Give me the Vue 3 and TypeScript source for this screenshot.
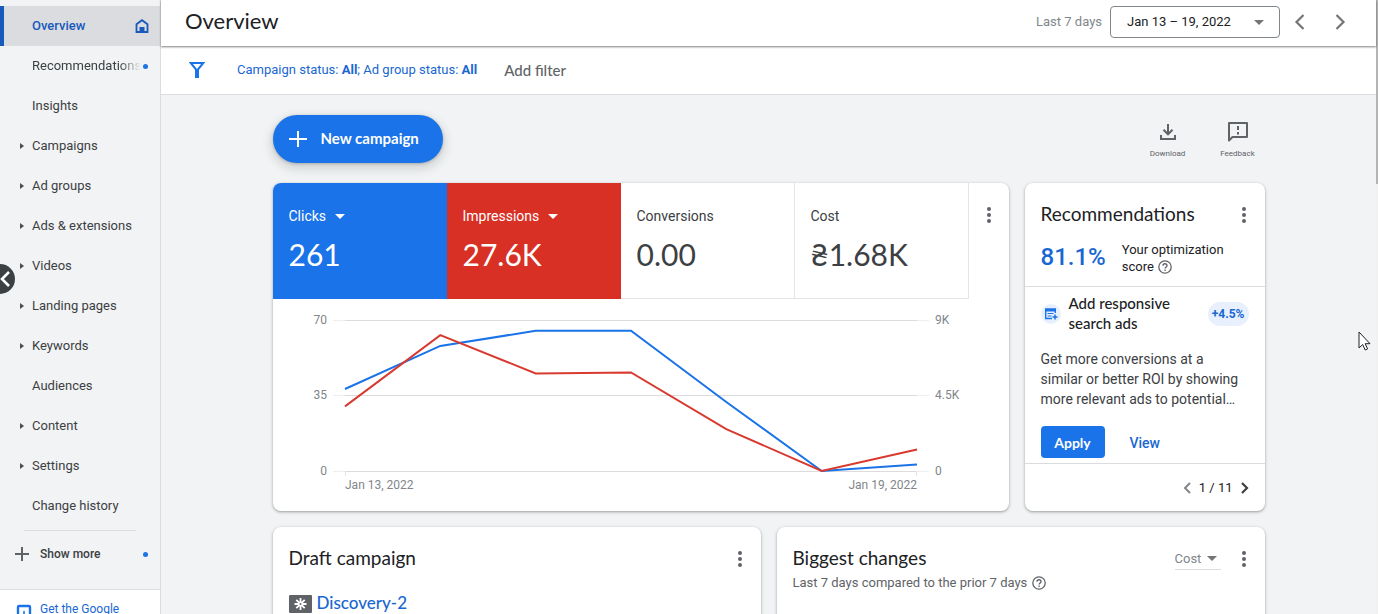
<script setup lang="ts">
import { computed, ref } from 'vue'

interface NavItem {
  label: string
  expandable?: boolean
  dot?: boolean
  home?: boolean
}

interface Metric {
  label: string
  value: string
  tone: 'blue' | 'red' | 'plain'
  selectable: boolean
}

const navItems: NavItem[] = [
  { label: 'Overview', home: true },
  { label: 'Recommendations', dot: true },
  { label: 'Insights' },
  { label: 'Campaigns', expandable: true },
  { label: 'Ad groups', expandable: true },
  { label: 'Ads & extensions', expandable: true },
  { label: 'Videos', expandable: true },
  { label: 'Landing pages', expandable: true },
  { label: 'Keywords', expandable: true },
  { label: 'Audiences' },
  { label: 'Content', expandable: true },
  { label: 'Settings', expandable: true },
  { label: 'Change history' },
]

const active = ref('Overview')

const metrics: Metric[] = [
  { label: 'Clicks', value: '261', tone: 'blue', selectable: true },
  { label: 'Impressions', value: '27.6K', tone: 'red', selectable: true },
  { label: 'Conversions', value: '0.00', tone: 'plain', selectable: false },
  { label: 'Cost', value: '₴1.68K', tone: 'plain', selectable: false },
]

const clicks = [38, 58, 65, 65, 32, 0, 3]
const impressions = [3850, 8100, 5820, 5870, 2500, 0, 1280]

const plot = { left: 72, right: 644, top: 21, bottom: 172 }

function toPoints(values: number[], max: number): string {
  const step = (plot.right - plot.left) / (values.length - 1)
  return values
    .map((v, i) => `${(plot.left + i * step).toFixed(1)},${(plot.bottom - (v / max) * (plot.bottom - plot.top)).toFixed(1)}`)
    .join(' ')
}

const clickLine = computed(() => toPoints(clicks, 70))
const impressionLine = computed(() => toPoints(impressions, 9000))

const gridRows = [
  { y: 21, left: '70', right: '9K' },
  { y: 96, left: '35', right: '4.5K' },
  { y: 172, left: '0', right: '0' },
]
</script>

<template>
  <div class="app">
    <nav class="sidebar" aria-label="Main">
      <ul class="nav-list">
        <li v-for="item in navItems" :key="item.label">
          <a href="#" class="nav-item" :class="{ active: item.label === active }" @click.prevent="active = item.label">
            <span class="caret-cell">
              <svg v-if="item.expandable" width="4" height="6" viewBox="0 0 4 6"><path d="M0 0 4 3 0 6z" fill="#4a4d51" /></svg>
            </span>
            <span class="nav-label" :class="{ faded: item.dot }">{{ item.label }}</span>
            <svg v-if="item.home" class="home" width="14" height="14" viewBox="0 0 14 14" fill="none">
              <path d="M1.5 13V5.2L7 1.2l5.5 4V13z" stroke="#185abc" stroke-width="1.8" />
              <path d="M4.5 8h5v5h-5z" fill="#185abc" />
            </svg>
            <span v-if="item.dot" class="dot"></span>
          </a>
        </li>
      </ul>
      <hr class="nav-rule" />
      <button type="button" class="show-more">
        <svg width="14" height="14" viewBox="0 0 14 14"><path d="M7 0v14M0 7h14" stroke="#5f6368" stroke-width="2" /></svg>
        <span>Show more</span>
        <span class="dot"></span>
      </button>
      <div class="sidebar-foot">
        <svg width="16" height="18" viewBox="0 0 16 18" fill="none">
          <rect x="2" y="2" width="12" height="15" rx="1" stroke="#1a73e8" stroke-width="2.4" />
          <path d="M8 7v7" stroke="#1a73e8" stroke-width="1.6" />
        </svg>
        <a href="#">Get the Google</a>
      </div>
      <button type="button" class="collapse" aria-label="Collapse navigation">
        <svg width="30" height="30" viewBox="0 0 30 30" fill="none"><path d="m24 8-7 7 7 7" stroke="#fff" stroke-width="2.6" /></svg>
      </button>
    </nav>

    <div class="page">
      <header class="topbar">
        <h1>Overview</h1>
        <div class="range">
          <label for="range">Last 7 days</label>
          <div class="range-box">
            <select id="range"><option>Jan 13 – 19, 2022</option></select>
            <svg width="10" height="5" viewBox="0 0 10 5"><path d="M0 0h10L5 5z" fill="#757575" /></svg>
          </div>
          <button type="button" class="step" aria-label="Previous period">
            <svg width="12" height="16" viewBox="0 0 12 16" fill="none"><path d="M9.5 1 2.5 8l7 7" stroke="#757575" stroke-width="2.2" /></svg>
          </button>
          <button type="button" class="step" aria-label="Next period">
            <svg width="12" height="16" viewBox="0 0 12 16" fill="none"><path d="m2.5 1 7 7-7 7" stroke="#757575" stroke-width="2.2" /></svg>
          </button>
        </div>
      </header>

      <div class="filters">
        <svg width="16" height="16" viewBox="0 0 16 16" fill="none">
          <path d="M1.8 1h12.4L8 8.6z" stroke="#1a73e8" stroke-width="2" />
          <path d="M6 7h4v9H6z" fill="#1a73e8" />
        </svg>
        <a href="#" class="filter-link">Campaign status: <b>All</b>; Ad group status: <b>All</b></a>
        <button type="button" class="add-filter">Add filter</button>
      </div>

      <main class="content">
        <div class="actions">
          <button type="button" class="fab">
            <svg width="18" height="16" viewBox="0 0 18 16"><path d="M9 0v16M0 8h18" stroke="#fff" stroke-width="2" /></svg>
            <span>New campaign</span>
          </button>
          <div class="tools">
            <button type="button" class="tool">
              <svg width="24" height="24" viewBox="0 0 24 24" fill="none" stroke="#5f6368" stroke-width="2">
                <path d="M12 4v10M7.5 9.8 12 14.3l4.5-4.5M5 15v4h14v-4" />
              </svg>
              <span>Download</span>
            </button>
            <button type="button" class="tool">
              <svg width="24" height="24" viewBox="0 0 24 24" fill="none">
                <path d="M3 20.5V3h18v14H6.5z" stroke="#5f6368" stroke-width="2" stroke-linejoin="round" />
                <path d="M12 6v4M12 12v2.5" stroke="#5f6368" stroke-width="2" />
              </svg>
              <span>Feedback</span>
            </button>
          </div>
        </div>

        <div class="row">
          <section class="card performance" aria-label="Performance">
            <div class="metrics">
              <div v-for="m in metrics" :key="m.label" class="metric" :class="m.tone">
                <div class="metric-name">
                  <template v-if="m.selectable">
                    <select :aria-label="m.label + ' metric'"><option>{{ m.label }}</option></select>
                    <svg width="10" height="5" viewBox="0 0 10 5"><path d="M0 0h10L5 5z" fill="#fff" /></svg>
                  </template>
                  <span v-else>{{ m.label }}</span>
                </div>
                <div class="metric-value">{{ m.value }}</div>
              </div>
              <div class="metric-menu">
                <button type="button" class="kebab" aria-label="More options"><i></i><i></i><i></i></button>
              </div>
            </div>
            <svg class="chart" viewBox="0 0 736 212" role="img" aria-label="Clicks and impressions by day">
              <g v-for="row in gridRows" :key="row.y">
                <path :d="`M60 ${row.y}.5H656`" stroke="#eeeeee" />
                <path :d="`M72 ${row.y}.5H644`" stroke="#dcdcdc" />
                <text x="54" :y="row.y + 4" text-anchor="end">{{ row.left }}</text>
                <text x="662" :y="row.y + 4">{{ row.right }}</text>
              </g>
              <path d="M72.5 172v5M643.5 172v5" stroke="#e4e4e4" />
              <polyline :points="clickLine" stroke="#1a73e8" />
              <polyline :points="impressionLine" stroke="#d93a30" />
              <text x="72" y="190">Jan 13, 2022</text>
              <text x="644" y="190" text-anchor="end">Jan 19, 2022</text>
            </svg>
          </section>

          <section class="card recs">
            <div class="card-head">
              <h2>Recommendations</h2>
              <button type="button" class="kebab" aria-label="More options"><i></i><i></i><i></i></button>
            </div>
            <div class="score">
              <strong>81.1%</strong>
              <span>Your optimization<br />score
                <svg class="help" width="14" height="14" viewBox="0 0 14 14" fill="none" stroke="#5f6368">
                  <circle cx="7" cy="7" r="6.2" stroke-width="1.3" />
                  <path d="M5 5.7c0-2.6 4-2.6 4 0C9 7 7.1 7.1 7.1 8.6M7.1 9.6v1.3" stroke-width="1.3" />
                </svg>
              </span>
            </div>
            <div class="rec-title">
              <span class="rec-icon">
                <svg width="14" height="12" viewBox="0 0 14 12" fill="none" stroke="#1a73e8">
                  <path d="M11.3 5V1.2H1.7v9.3H8" stroke-width="1.4" />
                  <path d="M1 2h11" stroke-width="3" />
                  <path d="M3.5 5.5h6M3.5 8h4" stroke-width="1.2" />
                  <path d="M11 6.5v5M8.5 9h5" stroke-width="1.5" />
                </svg>
              </span>
              <h3>Add responsive search ads</h3>
              <span class="pill">+4.5%</span>
            </div>
            <p>Get more conversions at a similar or better ROI by showing more relevant ads to potential…</p>
            <div class="rec-actions">
              <button type="button" class="apply">Apply</button>
              <button type="button" class="view">View</button>
            </div>
            <div class="pager">
              <button type="button" aria-label="Previous" disabled>
                <svg width="8" height="12" viewBox="0 0 8 12" fill="none"><path d="M7 1 2 6l5 5" stroke="#80868b" stroke-width="2" /></svg>
              </button>
              <span>1 / 11</span>
              <button type="button" aria-label="Next">
                <svg width="8" height="12" viewBox="0 0 8 12" fill="none"><path d="m1 1 5 5-5 5" stroke="#3c4043" stroke-width="2.2" /></svg>
              </button>
            </div>
          </section>
        </div>

        <div class="row">
          <section class="card half">
            <div class="card-head">
              <h2>Draft campaign</h2>
              <button type="button" class="kebab" aria-label="More options"><i></i><i></i><i></i></button>
            </div>
            <a href="#" class="draft">
              <svg width="23" height="18" viewBox="0 0 23 18">
                <rect width="23" height="18" rx="1" fill="#5f6368" />
                <path d="M11.5 3v12M5.5 9h12M7.3 4.8l8.400 8.400M15.700 4.800l-8.400 8.400" stroke="#fff" stroke-width="1.8" />
                <circle cx="11.5" cy="9" r="1" fill="#5f6368" />
              </svg>
              <span>Discovery-2</span>
            </a>
          </section>
          <section class="card half">
            <div class="card-head">
              <h2>Biggest changes</h2>
              <div class="cost-select">
                <select aria-label="Metric"><option>Cost</option></select>
                <svg width="10" height="5" viewBox="0 0 10 5"><path d="M0 0h10L5 5z" fill="#757575" /></svg>
              </div>
              <button type="button" class="kebab" aria-label="More options"><i></i><i></i><i></i></button>
            </div>
            <div class="compare">
              Last 7 days compared to the prior 7 days
              <svg class="help" width="14" height="14" viewBox="0 0 14 14" fill="none" stroke="#5f6368">
                <circle cx="7" cy="7" r="6.2" stroke-width="1.3" />
                <path d="M5 5.7c0-2.6 4-2.6 4 0C9 7 7.1 7.1 7.1 8.6M7.1 9.6v1.3" stroke-width="1.3" />
              </svg>
            </div>
          </section>
        </div>
      </main>
    </div>
    <div class="scroll-track"><div class="scroll-thumb"></div></div>

    <svg class="pointer" width="13" height="21" viewBox="0 0 13 21">
      <path d="M1 1v16l3.7-3.5L7.2 19l2.4-1.1-2.4-5.2H12z" fill="#fff" stroke="#222" stroke-width="1" />
    </svg>
  </div>
</template>

<style>
html,
body {
  margin: 0;
  overflow: hidden;
}
</style>

<style scoped>
.app {
  position: relative;
  display: flex;
  height: 100vh;
  overflow: hidden;
  background: #f1f3f4;
  color: #3c4043;
  font: 13px/20px Roboto, 'Liberation Sans', sans-serif;
}
* {
  box-sizing: border-box;
}
svg {
  display: block;
  flex: none;
}
button,
select {
  margin: 0;
  padding: 0;
  border: 0;
  background: none;
  color: inherit;
  font: inherit;
  cursor: pointer;
}
select {
  appearance: none;
}
a {
  color: #1967d2;
  text-decoration: none;
}
h1,
h2,
h3,
p {
  margin: 0;
  font-weight: 400;
}

/* Navigation */
.sidebar {
  position: relative;
  display: flex;
  flex: none;
  flex-direction: column;
  width: 161px;
  padding-top: 6px;
  border-right: 1px solid #dadce0;
}
.nav-list {
  margin: 0;
  padding: 0;
  list-style: none;
}
.nav-item {
  display: flex;
  align-items: center;
  height: 40px;
  padding-right: 12px;
  border-left: 4px solid transparent;
  color: #3c4043;
}
.nav-item.active {
  border-left-color: #185abc;
  background: #dadce0;
  color: #185abc;
  font-weight: 500;
}
.caret-cell {
  flex: none;
  width: 28px;
  padding-left: 16px;
}
.nav-label {
  flex: 1;
  overflow: hidden;
  white-space: nowrap;
}
.faded {
  margin-right: 2px;
  mask-image: linear-gradient(to right, #000 80%, transparent);
}
.home {
  margin-right: -1px;
}
.dot {
  flex: none;
  width: 5px;
  height: 5px;
  border-radius: 50%;
  background: #1a73e8;
}
.nav-rule {
  width: 112px;
  margin: 4px 24px 0;
  border: 0;
  border-top: 1px solid #dadce0;
}
.show-more {
  display: flex;
  align-items: center;
  gap: 11px;
  height: 46px;
  padding: 0 12px 0 15px;
  font-size: 12px;
  font-weight: 500;
  text-align: left;
}
.show-more .dot {
  margin-left: auto;
}
.sidebar-foot {
  display: flex;
  flex: 1;
  gap: 8px;
  min-height: 25px;
  margin-top: 12px;
  padding: 9px 16px 0;
  overflow: hidden;
  border-top: 1px solid #dadce0;
  background: #fff;
  font-size: 12px;
  white-space: nowrap;
}
.sidebar-foot svg {
  margin-top: 5px;
}
.collapse {
  position: absolute;
  top: 264px;
  left: -15px;
  width: 30px;
  height: 30px;
  border-radius: 50%;
  background: #3c4043;
}

/* Page frame */
.page {
  display: flex;
  flex: 1;
  flex-direction: column;
  min-width: 0;
}
.topbar {
  z-index: 1;
  display: flex;
  flex: none;
  align-items: center;
  justify-content: space-between;
  height: 46px;
  padding: 0 24px 2px;
  background: #fff;
  box-shadow: 0 1px 2px rgba(0, 0, 0, 0.5);
}
h1 {
  padding-bottom: 2px;
  color: #202124;
  font: 22px/28px Lato, sans-serif;
}
.range {
  display: flex;
  align-items: center;
}
.range label {
  margin-right: 8px;
  color: #80868b;
}
.range-box {
  display: flex;
  align-items: center;
  justify-content: space-between;
  width: 170px;
  height: 32px;
  margin-right: 8px;
  padding: 0 15px 0 16px;
  border: 1px solid #80868b;
  border-radius: 4px;
  color: #202124;
}
.step {
  display: grid;
  place-items: center;
  width: 24px;
  height: 32px;
}
.step + .step {
  margin-left: 16px;
}
.filters {
  display: flex;
  flex: none;
  align-items: center;
  height: 49px;
  padding-left: 28px;
  border-bottom: 1px solid #dadce0;
  background: #fff;
}
.filter-link {
  margin: 0 27px 0 32px;
}
.filter-link b {
  font-weight: 700;
}
.add-filter {
  color: #5f6368;
  font: 500 15px/20px Lato, sans-serif;
}

/* Content */
.content {
  display: flex;
  flex-direction: column;
  gap: 16px;
  width: 100%;
  max-width: 992px;
  margin: 0 auto;
  padding-top: 20px;
}
.actions {
  display: flex;
  justify-content: space-between;
  margin-bottom: 4px;
}
.fab {
  display: flex;
  align-items: center;
  gap: 14px;
  height: 48px;
  padding: 0 24px 0 16px;
  border-radius: 24px;
  background: #1a73e8;
  box-shadow: 0 1px 3px rgba(60, 64, 67, 0.3), 0 4px 8px 3px rgba(60, 64, 67, 0.15);
  color: #fff;
  font: 700 15px/20px Lato, sans-serif;
}
.fab span {
  padding-bottom: 2px;
}
.tools {
  display: flex;
  gap: 22px;
  margin-right: 3px;
}
.tool {
  display: flex;
  flex-direction: column;
  align-items: center;
  width: 48px;
  height: 48px;
  padding-top: 5px;
  color: #5f6368;
  font-size: 8px;
  line-height: 19px;
}
.row {
  display: flex;
  gap: 16px;
}
.card {
  overflow: hidden;
  border-radius: 8px;
  background: #fff;
  box-shadow: 0 1px 2px rgba(60, 64, 67, 0.3), 0 1px 3px 1px rgba(60, 64, 67, 0.15);
}
.performance {
  flex: 1;
  min-width: 0;
}
.metrics {
  display: grid;
  grid-template-columns: repeat(4, 1fr) 40px;
  height: 116px;
}
.metric {
  padding: 23px 15px 0 16px;
  font-size: 14px;
}
.metric.blue {
  background: #1a73e8;
  color: #fff;
}
.metric.red {
  background: #d93025;
  color: #fff;
}
.metric.plain {
  border-right: 1px solid #e4e4e4;
  border-bottom: 1px solid #e4e4e4;
}
.metric-name {
  display: flex;
  align-items: center;
  gap: 8px;
}
.metric-value {
  margin-top: 8px;
  font: 30px/40px Lato, sans-serif;
}
.metric-menu {
  display: flex;
  justify-content: center;
  padding-top: 22px;
}
.kebab {
  display: flex;
  flex: none;
  flex-direction: column;
  align-items: center;
  justify-content: center;
  gap: 2px;
  width: 10px;
  height: 20px;
}
.kebab i {
  width: 4px;
  height: 4px;
  border-radius: 50%;
  background: #5f6368;
}
.chart {
  width: 100%;
  height: auto;
  fill: none;
}
.chart text {
  fill: #80868b;
  font-size: 12px;
}
.chart polyline {
  stroke-width: 2;
}
h2 {
  flex: 1;
  padding-bottom: 2px;
  color: #202124;
  font: 19px/22px Lato, sans-serif;
}
.card-head {
  display: flex;
  align-items: center;
  padding: 20px 16px 0;
}

/* Recommendations */
.recs {
  display: flex;
  flex: none;
  flex-direction: column;
  width: 240px;
}
.score {
  display: flex;
  gap: 16px;
  align-items: center;
  padding: 14px 16px 11px;
  border-bottom: 1px solid #dadce0;
  color: #202124;
  line-height: 17px;
}
.score strong {
  padding-bottom: 2px;
  color: #1967d2;
  font-size: 24px;
  font-weight: 500;
}
.help {
  display: inline-block;
  margin-left: 1px;
  vertical-align: -3px;
}
.rec-title {
  display: flex;
  align-items: center;
  padding: 6px 16px 0;
}
.rec-icon {
  display: grid;
  flex: none;
  place-items: center;
  width: 20px;
  height: 20px;
  margin-right: 8px;
  border-radius: 50%;
  background: #e8f0fe;
}
h3 {
  flex: 1;
  max-width: 116px;
  margin-right: auto;
  padding-bottom: 2px;
  color: #202124;
  font: 500 15px/20px Lato, sans-serif;
}
.pill {
  padding: 2px 4px;
  border-radius: 12px;
  background: #e8f0fe;
  color: #1967d2;
  font-size: 12px;
  font-weight: 700;
}
.recs p {
  padding: 14px 16px 0;
  font-size: 14px;
}
.rec-actions {
  display: flex;
  gap: 25px;
  padding: 17px 16px 5px;
}
.apply {
  width: 64px;
  height: 32px;
  padding-top: 2px;
  border-radius: 4px;
  background: #1a73e8;
  color: #fff;
  font: 700 14px/20px Lato, sans-serif;
}
.view {
  padding-top: 2px;
  color: #1967d2;
  font-size: 14px;
  font-weight: 500;
}
.pager {
  display: flex;
  flex: 1;
  align-items: center;
  justify-content: flex-end;
  gap: 8px;
  padding-right: 16px;
  border-top: 1px solid #dadce0;
  color: #202124;
}

/* Lower cards */
.half {
  flex: 1;
  min-width: 0;
  height: 240px;
}
.draft {
  display: flex;
  gap: 5px;
  align-items: center;
  padding: 22px 16px 0;
  font: 500 17px/20px Lato, sans-serif;
}
.draft span {
  padding-bottom: 2px;
}
.cost-select {
  display: flex;
  gap: 5px;
  align-items: center;
  height: 22px;
  margin-right: 18px;
  padding-right: 4px;
  border-bottom: 1px solid #dadce0;
  color: #80868b;
}
.compare {
  padding: 2px 16px 0;
  color: #5f6368;
}

/* Window furniture */
.scroll-track {
  flex: none;
  width: 2px;
  background: #f1f1f1;
}
.scroll-thumb {
  height: 30%;
  background: #b4b4b4;
}
.pointer {
  position: absolute;
  top: 331px;
  left: 1358px;
}
</style>
